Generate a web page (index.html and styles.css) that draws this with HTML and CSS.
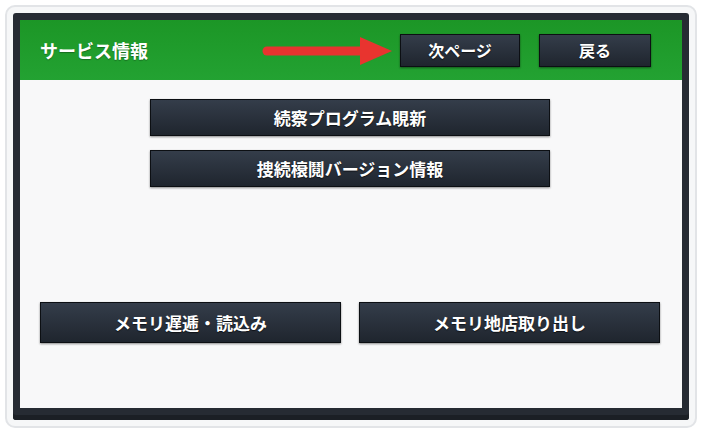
FILE: index.html
```html
<!DOCTYPE html>
<html>
<head>
<meta charset="utf-8" />
<title>サービス情報</title>
<link rel="stylesheet" href="styles.css">
</head>
<body>
<!-- ********************* Screen begin *********************** -->
<div class="screen">
 <div class="frame">
  <div class="header">
   <h1 class="title">サービス情報</h1>
   <svg class="arrow" width="132" height="34" viewBox="0 0 132 34">
    <line x1="5" y1="17" x2="104" y2="17" stroke="#e8342f" stroke-width="9" stroke-linecap="round"/>
    <polygon points="98,3 130,17 98,31" fill="#e8342f"/>
   </svg>
   <div class="buttonClass next">次ページ</div>
   <div class="buttonClass back">戻る</div>
  </div>
  <div class="content">
   <div class="topGroup">
    <div class="buttonClass wide">続察プログラム睍新</div>
    <div class="buttonClass wide">捜続榱鬩バージョン情報</div>
   </div>
   <div class="bottomRow">
    <div class="buttonClass half">メモリ遅逓・読込み</div>
    <div class="buttonClass half">メモリ地店取り出し</div>
   </div>
  </div>
 </div>
</div>
<!-- ********************* Screen end *********************** -->
</body>
</html>
```
FILE: styles.css
```css
body {
margin:0; background-color:#fff;
font-family: "Noto Sans CJK JP", "Noto Sans", sans-serif;
}
.screen {
margin:5px; height:423px; box-sizing:border-box;
border-radius:10px; background-color:#f6f7f8;
border:2px solid #e2e4e7;
padding:6px;
}
.frame {
height:100%; box-sizing:border-box;
background-color:#262b33; border-radius:3px;
padding:7px 7px 12px 7px;
display:flex; flex-direction:column;
box-shadow: inset 0 -5px 0 #1b1f25;
}
.header {
height:60px; flex:none;
background: linear-gradient(#1c9626, #23a232);
display:flex; align-items:center;
padding:0 31px 0 20px;
}
.title {
margin:0; font-size:18px; font-weight:bold; color:#fff;
flex:1; text-shadow: 0 1px 1px rgba(0,0,0,.3);
}
.arrow { margin-right:6px; margin-top:2px; }
.buttonClass {
box-sizing:border-box;
background: linear-gradient(#343d4a, #1f252e);
border:1px solid #0c0f13;
box-shadow: 0 1px 2px rgba(0,0,0,.45);
color:#fff; font-weight:bold; font-size:17px;
text-shadow: 0 1px 1px rgba(0,0,0,.6);
display:flex; align-items:center; justify-content:center;
}
.next { width:120px; height:33px; margin-right:19px; font-size:16px; }
.back { width:112px; height:33px; font-size:16px; }
.content {
flex:1; background-color:#f8f8f9;
display:flex; flex-direction:column; justify-content:space-between;
padding:19px 22px 65px 20px;
}
.topGroup {
display:flex; flex-direction:column; align-items:center; gap:14px;
}
.wide { width:400px; height:37px; }
.bottomRow { display:flex; justify-content:space-between; }
.half { width:301px; height:41px; }
```
